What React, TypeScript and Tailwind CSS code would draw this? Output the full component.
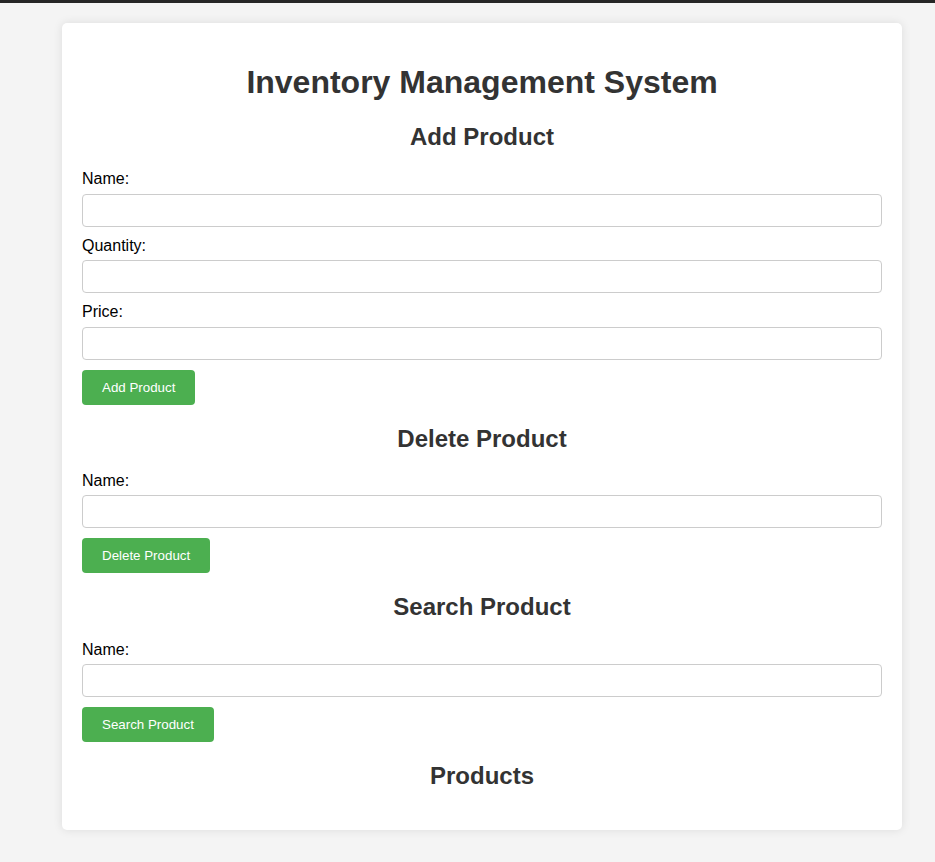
import React from 'react';

function Field({ label }: { label: string }) {
  return (
    <>
      <label className="block text-[16px] leading-[18.4px] text-black mb-[5px]">{label}</label>
      <input
        type="text"
        className="block w-full h-[33px] px-2 mb-[10px] border border-[#ccc] rounded-[4px] bg-white text-[13.33px] outline-none"
      />
    </>
  );
}

function GreenButton({ children }: { children: React.ReactNode }) {
  return (
    <button className="block h-[35px] px-5 bg-[#4CAF50] text-white text-[13.33px] leading-[15px] rounded-[4px]">
      {children}
    </button>
  );
}

function SectionTitle({ children }: { children: React.ReactNode }) {
  return (
    <h2 className="text-center text-[24px] leading-[27.6px] font-bold text-[#333] my-[19.92px]">
      {children}
    </h2>
  );
}

export default function App() {
  return (
    <div className="min-h-screen bg-[#f4f4f4] font-['Liberation_Sans',Arial,sans-serif]">
      <div className="h-[3px] bg-[#262626]" />
      <div className="flow-root">
        <div className="ml-[62px] mt-[20px] w-[840px] bg-white rounded-[5px] p-5 shadow-[0_0_10px_rgba(0,0,0,0.1)]">
          <h1 className="text-center text-[32px] leading-[37px] font-bold text-[#333] my-[21.44px]">
            Inventory Management System
          </h1>

          {/* Add */}
          <SectionTitle>Add Product</SectionTitle>
          <form onSubmit={(e) => e.preventDefault()}>
            <Field label="Name:" />
            <Field label="Quantity:" />
            <Field label="Price:" />
            <GreenButton>Add Product</GreenButton>
          </form>

          {/* Delete */}
          <SectionTitle>Delete Product</SectionTitle>
          <form onSubmit={(e) => e.preventDefault()}>
            <Field label="Name:" />
            <GreenButton>Delete Product</GreenButton>
          </form>

          {/* Search */}
          <SectionTitle>Search Product</SectionTitle>
          <form onSubmit={(e) => e.preventDefault()}>
            <Field label="Name:" />
            <GreenButton>Search Product</GreenButton>
          </form>

          <SectionTitle>Products</SectionTitle>
          <ul />
        </div>
      </div>
    </div>
  );
}
